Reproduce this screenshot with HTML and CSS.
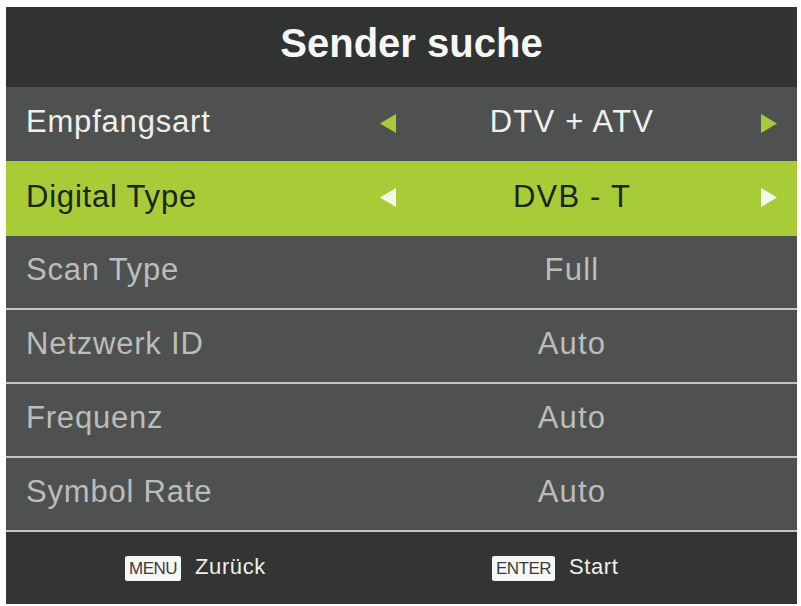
FILE: index.html
```html
<!DOCTYPE html>
<html lang="de">
<head>
<meta charset="utf-8">
<title>Sender suche</title>
<link rel="stylesheet" href="styles.css">
</head>
<body>
<div class="panel">
  <div class="header"><h1 class="title">Sender suche</h1></div>

  <div class="row row-active">
    <span class="label">Empfangsart</span>
    <svg class="arrow arrow-l" viewBox="0 0 16 19"><polygon points="16,0 16,19 0,9.5"/></svg>
    <span class="value">DTV + ATV</span>
    <svg class="arrow arrow-r" viewBox="0 0 16 19"><polygon points="0,0 0,19 16,9.5"/></svg>
  </div>

  <div class="row row-selected">
    <span class="label">Digital Type</span>
    <svg class="arrow arrow-l" viewBox="0 0 16 19"><polygon points="16,0 16,19 0,9.5"/></svg>
    <span class="value">DVB - T</span>
    <svg class="arrow arrow-r" viewBox="0 0 16 19"><polygon points="0,0 0,19 16,9.5"/></svg>
  </div>

  <div class="row row-dim">
    <span class="label">Scan Type</span>
    <span class="value">Full</span>
  </div>
  <div class="row row-dim">
    <span class="label">Netzwerk ID</span>
    <span class="value">Auto</span>
  </div>
  <div class="row row-dim">
    <span class="label">Frequenz</span>
    <span class="value">Auto</span>
  </div>
  <div class="row row-dim">
    <span class="label">Symbol Rate</span>
    <span class="value">Auto</span>
  </div>

  <div class="footer">
    <div class="hint"><span class="key">MENU</span><span class="hint-text">Zurück</span></div>
    <div class="hint"><span class="key">ENTER</span><span class="hint-text">Start</span></div>
  </div>
</div>
</body>
</html>
```

FILE: styles.css
```css
html, body {
  margin: 0;
  padding: 0;
  background: #ffffff;
}

body {
  font-family: "Liberation Sans", Arial, sans-serif;
}

.panel {
  margin: 7px 0 0 6px;
  width: 791px;
  height: 597px;
  display: flex;
  flex-direction: column;
  background: #4e5150;
}

.header {
  height: 80px;
  flex: none;
  background: #303331;
  display: flex;
  align-items: center;
  justify-content: center;
  box-sizing: border-box;
  padding: 0 0 8px 20px;
}

.title {
  margin: 0;
  font-size: 40px;
  font-weight: bold;
  color: #f6f6f4;
  letter-spacing: 0;
}

.row {
  flex: none;
  display: grid;
  grid-template-columns: 362px 40px 328px 1fr;
  align-items: center;
  box-sizing: border-box;
  font-size: 31px;
  letter-spacing: 0.8px;
}

.label {
  grid-column: 1;
  padding-left: 20px;
  padding-bottom: 4px;
  white-space: nowrap;
}

.value {
  grid-column: 3;
  text-align: center;
  padding-bottom: 4px;
  white-space: nowrap;
  letter-spacing: 1.2px;
}

.arrow {
  width: 16px;
  height: 19px;
  display: block;
}

.arrow-l {
  grid-column: 2;
  justify-self: center;
  margin-bottom: 2px;
}

.arrow-r {
  grid-column: 4;
  justify-self: start;
  margin-left: 25px;
  margin-bottom: 2px;
}

.row-active {
  height: 74px;
  background: #4e5150;
  color: #eff0ee;
}

.row-active .arrow {
  fill: #a6ca3a;
}

.row-selected {
  height: 75px;
  background: #a7cc38;
  color: #1b2612;
}

.row-selected .arrow {
  fill: #f4f8ea;
}

.row-dim {
  height: 74px;
  background: #4e5150;
  color: #babdbc;
  border-bottom: 2px solid #c2c5c4;
}

.footer {
  flex: 1;
  background: #323532;
  display: flex;
  align-items: center;
  padding-left: 119px;
  gap: 226px;
}

.hint {
  display: flex;
  align-items: center;
  gap: 14px;
}

.key {
  background: #f7f7f5;
  color: #3a3d3b;
  font-size: 17px;
  line-height: 25px;
  height: 25px;
  padding: 0 4px;
  border-radius: 2px;
  letter-spacing: -0.5px;
  box-sizing: border-box;
}

.hint-text {
  color: #eeefed;
  font-size: 22px;
  letter-spacing: 0.6px;
  padding-bottom: 2px;
}
```
